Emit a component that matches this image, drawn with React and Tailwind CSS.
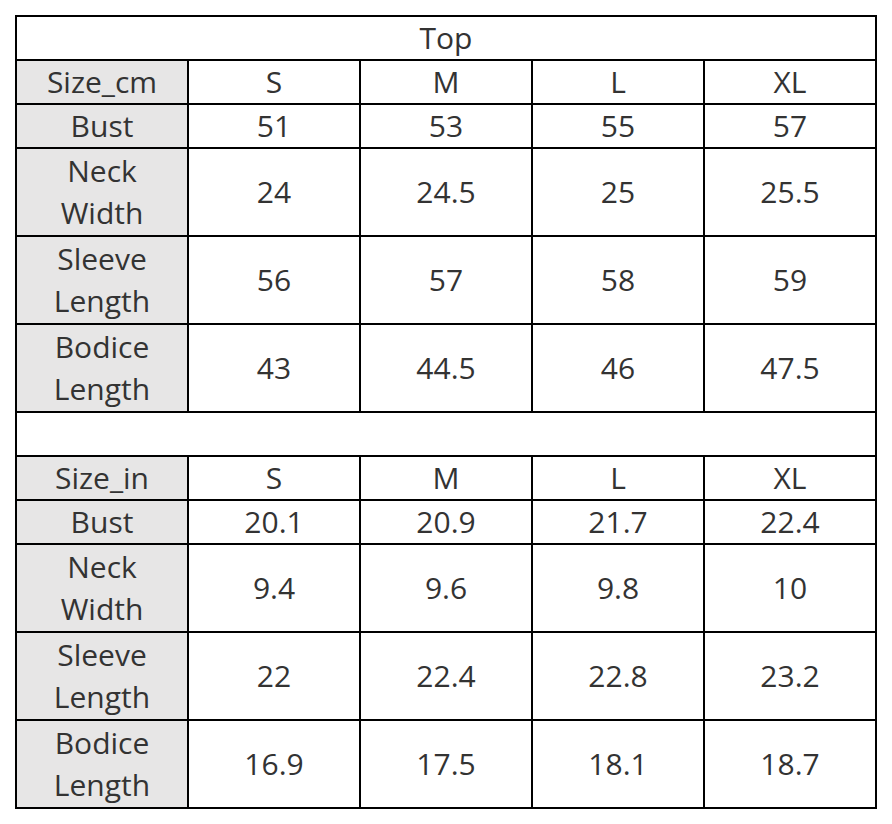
const cm = [
  { label: ["Bust"], vals: ["51", "53", "55", "57"] },
  { label: ["Neck", "Width"], vals: ["24", "24.5", "25", "25.5"] },
  { label: ["Sleeve", "Length"], vals: ["56", "57", "58", "59"] },
  { label: ["Bodice", "Length"], vals: ["43", "44.5", "46", "47.5"] },
];

const inch = [
  { label: ["Bust"], vals: ["20.1", "20.9", "21.7", "22.4"] },
  { label: ["Neck", "Width"], vals: ["9.4", "9.6", "9.8", "10"] },
  { label: ["Sleeve", "Length"], vals: ["22", "22.4", "22.8", "23.2"] },
  { label: ["Bodice", "Length"], vals: ["16.9", "17.5", "18.1", "18.7"] },
];

const sizes = ["S", "M", "L", "XL"];

function HeadRow({ label }) {
  return (
    <tr className="h-[44px]">
      <td className="border-2 border-black bg-[#e7e6e6] p-0">{label}</td>
      {sizes.map((s) => (
        <td key={s} className="border-2 border-black p-0">{s}</td>
      ))}
    </tr>
  );
}

function DataRow({ row }) {
  const tall = row.label.length > 1;
  return (
    <tr className={tall ? "h-[88px]" : "h-[44px]"}>
      <td className="border-2 border-black bg-[#e7e6e6] p-0 leading-[42px]">
        {row.label.map((l) => (
          <div key={l}>{l}</div>
        ))}
      </td>
      {row.vals.map((v, i) => (
        <td key={i} className="border-2 border-black p-0">{v}</td>
      ))}
    </tr>
  );
}

export default function App() {
  return (
    <div className="w-[892px] h-[824px] bg-white pl-[15px] pt-[15px]">
      <table
        className="w-[862px] table-fixed border-collapse text-center text-[30px] leading-[40px] text-[#333333]"
        style={{ fontFamily: '"Open Sans", "Noto Sans", sans-serif' }}
      >
        <tbody>
          <tr className="h-[44px]">
            <td colSpan={5} className="border-2 border-black p-0">Top</td>
          </tr>
          <HeadRow label="Size_cm" />
          {cm.map((r) => (
            <DataRow key={r.label.join()} row={r} />
          ))}
          <tr className="h-[44px]">
            <td colSpan={5} className="border-2 border-black p-0"></td>
          </tr>
          <HeadRow label="Size_in" />
          {inch.map((r) => (
            <DataRow key={r.label.join()} row={r} />
          ))}
        </tbody>
      </table>
    </div>
  );
}
